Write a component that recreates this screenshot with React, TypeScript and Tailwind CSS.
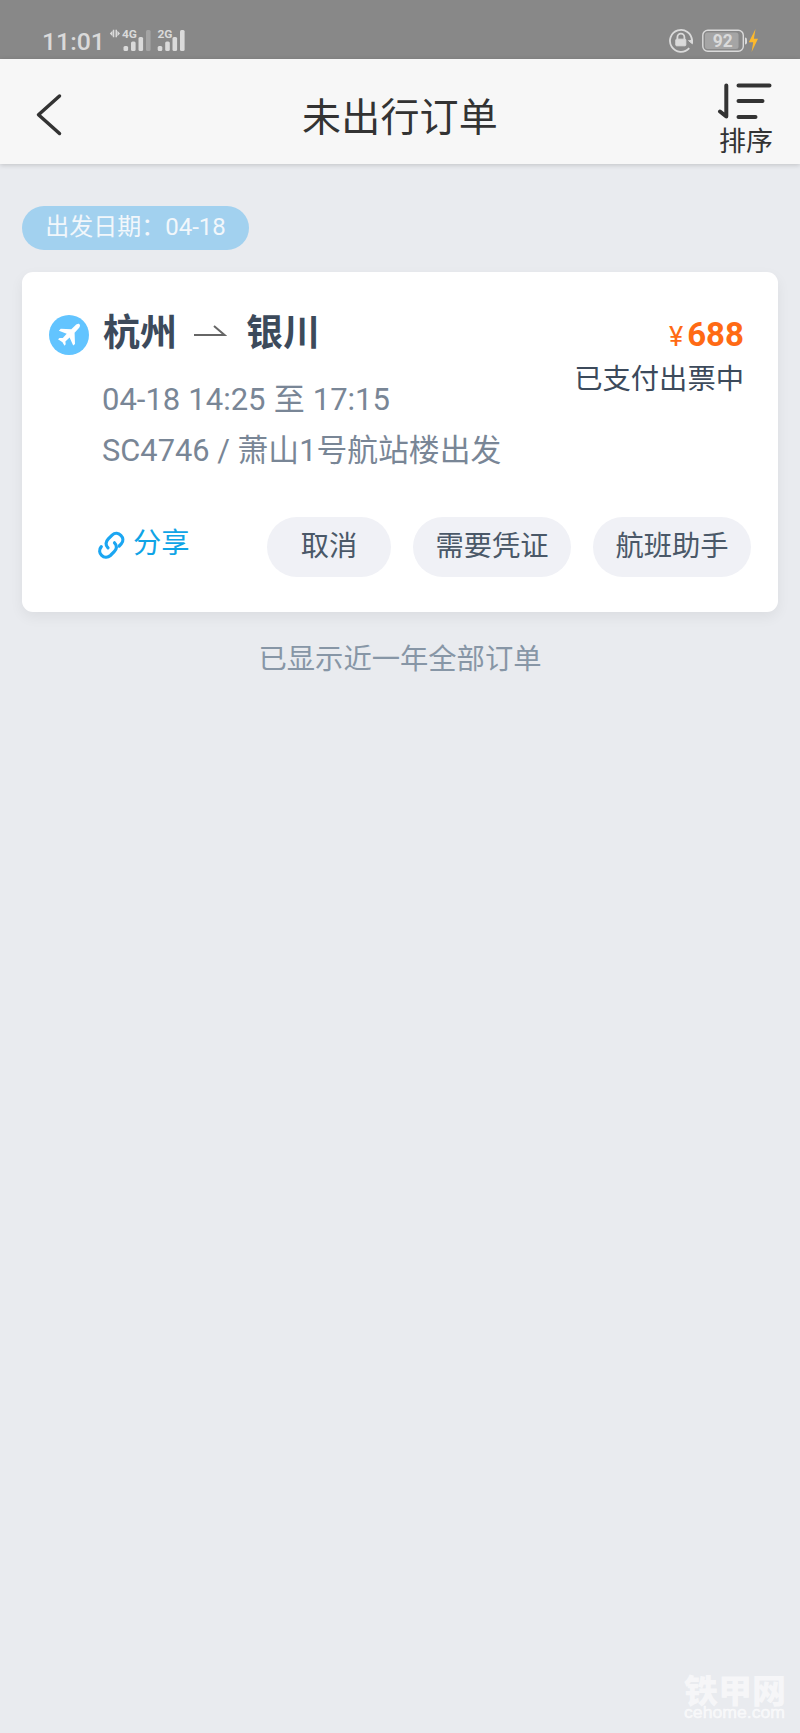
import type { ReactNode } from "react";

const actions = [
  { label: "取消", width: "w-[124px]" },
  { label: "需要凭证", width: "w-[158px]" },
  { label: "航班助手", width: "w-[158px]" },
];

function StatusBar() {
  return (
    <div className="flex h-[59px] items-start justify-between bg-[#888888] text-[#dadada]">
      <div className="flex pl-[42px]">
        <span className="mt-[26px] w-[67px] text-[24.8px] font-medium leading-[32px]">11:01</span>
        <svg width="76" height="24" viewBox="0 0 76 24" fill="#dadada" className="mt-[29px]">
          <path d="M.8 4.5 3.4 1.8V7.2ZM3.8.8h1.5v7.4H3.8ZM6.5.8H8v7.4H6.5ZM11 4.5 8.4 1.8v5.4Z" />
          <text x="13" y="9" fontSize="11" fontWeight="700" textLength="15" lengthAdjust="spacingAndGlyphs">4G</text>
          <rect x="14.5" y="17" width="4.6" height="5" rx="1.5" />
          <rect x="22" y="12.5" width="4.6" height="9.5" rx="1.5" />
          <rect x="29.5" y="8" width="4.6" height="14" rx="1.5" />
          <rect x="37" y="1" width="4.6" height="21" rx="1.5" fillOpacity=".35" />
          <text x="48.5" y="9" fontSize="11" fontWeight="700" textLength="15" lengthAdjust="spacingAndGlyphs">2G</text>
          <rect x="48.7" y="17" width="4.6" height="5" rx="1.5" />
          <rect x="56.2" y="12.5" width="4.6" height="9.5" rx="1.5" />
          <rect x="63.5" y="8" width="4.6" height="14" rx="1.5" />
          <rect x="71" y="1" width="4.6" height="21" rx="1.5" />
        </svg>
      </div>
      <div className="mt-7 flex pr-[40px]">
        <svg width="28" height="26" viewBox="0 0 28 26" fill="none" stroke="#dadada" strokeWidth="1.8">
          <path d="M21.2 20.2A11 11 0 1 1 24 12.5V15" />
          <path d="m20.4 12.5 4 3.3V11.5" fill="#dadada" strokeWidth="1" />
          <path d="M9.4 11.5V9.2a3.5 3.5 0 0 1 7 0v2.3" />
          <rect x="7.8" y="11.2" width="10" height="6.6" rx=".8" fill="#dadada" strokeWidth="1" />
        </svg>
        <svg width="60" height="26" viewBox="0 0 60 26" className="ml-[4px]">
          <rect x="2.8" y="2.3" width="40.5" height="21" rx="5" fill="none" stroke="#dadada" strokeWidth="1.4" />
          <rect x="5" y="4.5" width="33.5" height="16.6" rx="2.5" fill="#a5a5a5" />
          <path d="M45 9.5q2 0 2 2v3q0 2-2 2Z" fill="#dadada" />
          <text x="12.7" y="19" fontSize="17.5" fontWeight="700" fill="#dadada" textLength="20" lengthAdjust="spacingAndGlyphs">92</text>
          <path d="M55.5 1 48.8 14.3h4.4L51.6 24 58 10.8h-4.1Z" fill="#fdb92c" />
        </svg>
      </div>
    </div>
  );
}

function Header() {
  return (
    <header className="relative flex h-[105px] items-start justify-between bg-[#f7f7f7] text-[#333333] shadow-[0_1px_5px_rgba(0,0,0,0.18)]">
      <svg width="100" height="105" viewBox="0 0 100 105" fill="none" stroke="#333" strokeWidth="3.5" strokeLinecap="round" strokeLinejoin="round">
        <path d="M59.5 37 38.5 55.7 59.5 74.5" />
      </svg>
      <h1 className="mt-[34px] text-[39px] leading-[50px] tracking-[0.2px]">未出行订单</h1>
      <button type="button" className="flex w-[100px] flex-col pl-[16px] text-left">
        <svg width="60" height="44" viewBox="0 0 60 44" fill="none" stroke="#333" strokeWidth="4" strokeLinecap="round" strokeLinejoin="round" className="mt-[20px]">
          <path d="M10.3 6.5V37.5L4 32.5M22.5 6.5H53.5M22.5 22H46.5M22.5 38H39.5" />
        </svg>
        <span className="ml-[3px] mt-[2px] text-[27px] leading-[34px]">排序</span>
      </button>
    </header>
  );
}

function PlaneIcon() {
  return (
    <svg width="40" height="40" viewBox="0 0 40 40">
      <circle cx="20" cy="20" r="20" fill="#62c4ff" />
      <path
        fill="#fff"
        d="M30.5 9.2c1.1 1.1.3 3-1 4.3l-3.9 4.2.4 11.3-1.8 1.6-3.6-8.2-4.2 4 .3 2.8-1.2 1.5-2-3.5-4.5-2.9 1.6-1.3 3.2.1 3.9-4.3-7.8-3 1.8-2 10.6.5 3.9-3.9c1.3-1.3 3.2-2.3 4.3-1.2Z"
      />
    </svg>
  );
}

function LinkIcon() {
  return (
    <svg width="29" height="29" viewBox="0 0 29 29" fill="none" stroke="#1ba6f2" strokeWidth="3.2" strokeLinecap="round">
      <path d="M11 16.8C8.1 14 8.7 10.5 11.3 7.9L15.1 4.1C21.1-1.2 29.4 7 24.2 13L22.2 15" />
      <path d="M17.5 11.8C20.4 14.6 19.8 18.1 17.2 20.7L13.4 24.5C7.4 29.8-.9 21.6 4.3 15.6" />
    </svg>
  );
}

function PillButton({ width, children }: { width: string; children: ReactNode }) {
  return (
    <button type="button" className={`${width} h-[60px] rounded-full bg-[#f0f1f6] text-[28.3px] leading-[60px] text-[#4a5868]`}>
      {children}
    </button>
  );
}

function OrderCard() {
  return (
    <section className="mt-[22px] h-[340px] rounded-[11px] bg-white pl-[27px] pr-[27px] shadow-[0_5px_14px_rgba(0,0,0,0.06)]">
      <div className="flex h-[245px] justify-between">
        <div className="flex">
          <div className="mt-[43px] w-[54px]">
            <PlaneIcon />
          </div>
          <div className="pt-[37px]">
            <div className="flex items-center text-[37px] font-bold leading-[50px] text-[#3c4a5b]">
              <span>杭州</span>
              <svg width="34" height="20" viewBox="0 0 34 20" fill="none" stroke="#666" strokeWidth="2" className="ml-[16px] mr-[19px] -mt-[5px]">
                <path d="M1 13H31.5L21 4" />
              </svg>
              <span>银川</span>
            </div>
            <div className="-ml-px mt-[15px] leading-[51px] text-[#798696]">
              <p className="text-[31px] [word-spacing:0.4px]">04-18 14:25 至 17:15</p>
              <p className="text-[30.8px]">SC4746 / 萧山1号航站楼出发</p>
            </div>
          </div>
        </div>
        <div className="pr-[7px] pt-[42px] text-right">
          <p className="text-[33px] font-bold leading-[42px] text-[#ff6a14]">
            <span className="mr-[4px] text-[27px] font-normal">¥</span>688
          </p>
          <p className="mt-[2px] text-[28.3px] leading-[40px] text-[#3c4a5b]">已支付出票中</p>
        </div>
      </div>
      <div className="flex items-start justify-between">
        <div className="flex pl-[48px] text-[28.3px] leading-[40px] text-[#0fa4e6]">
          <span className="mt-[14px]">
            <LinkIcon />
          </span>
          <span className="ml-[7px] mt-[7px]">分享</span>
        </div>
        <div className="flex gap-[22px]">
          {actions.map((action) => (
            <PillButton key={action.label} width={action.width}>
              {action.label}
            </PillButton>
          ))}
        </div>
      </div>
    </section>
  );
}

export default function App() {
  return (
    <div className="flex h-[1733px] w-[800px] flex-col overflow-hidden bg-[#e9ebef] font-[Roboto,'Noto_Sans_CJK_SC',sans-serif]">
      <StatusBar />
      <Header />
      <main className="flex-1 px-[22px] pt-[42px]">
        <div className="flex h-[44px] w-[227px] justify-center rounded-full bg-[#a2d1ef] text-[24px] leading-[42px] text-[#f2f7fb]">
          出发日期：04-18
        </div>
        <OrderCard />
        <p className="mt-[28px] text-center text-[28.3px] leading-[40px] text-[#8796a6]">已显示近一年全部订单</p>
      </main>
      <footer className="mb-[10px] mr-[13px] flex flex-col items-end text-white/60">
        <svg width="104" height="62" viewBox="0 -14 104 62" fill="currentColor">
          <text x="1" y="28" fontSize="33" fontWeight="900" textLength="102" lengthAdjust="spacingAndGlyphs">铁甲网</text>
          <text x="1" y="43" fontSize="17" stroke="currentColor" strokeWidth=".6" textLength="101" lengthAdjust="spacingAndGlyphs" className="font-['Liberation_Sans']">cehome.com</text>
        </svg>
      </footer>
    </div>
  );
}
